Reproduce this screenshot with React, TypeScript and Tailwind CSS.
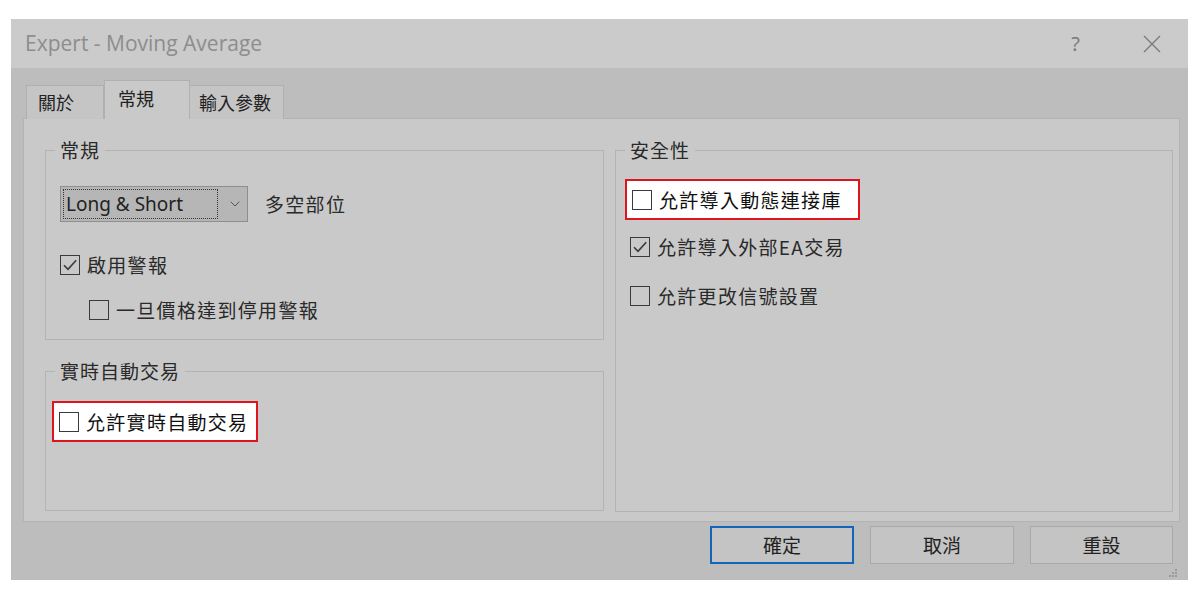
import { ChevronDown } from "lucide-react";

const cjk = "font-['Noto_Sans_CJK_TC','Noto_Sans',sans-serif]";

const Box = ({ checked = false }: { checked?: boolean }) => (
  <span className="w-[20px] h-[20px] border-[1.5px] border-[#3a3a3a] flex items-center justify-center shrink-0">
    {checked && (
      <svg width="16" height="16" viewBox="0 0 16 16">
        <path d="M2 8.2 L6 12.4 L14.2 3.2" fill="none" stroke="#3a3a3a" strokeWidth="1.6" />
      </svg>
    )}
  </span>
);

const Check = ({ label, checked, hl, wide }: { label: string; checked?: boolean; hl?: boolean; wide?: boolean }) => (
  <div
    className={`flex items-center gap-[7px] h-[41px] ${
      hl
        ? `bg-white border-2 border-[#e0141e] text-[#111] w-fit ${wide ? "-ml-[5px] pl-[5px] pr-[16px]" : "-ml-[8px] pl-[5px] pr-[8px]"}`
        : "text-[#2a2a2a]"
    }`}
  >
    <Box checked={checked} />
    <span className="text-[19px] tracking-[1.3px] leading-none">{label}</span>
  </div>
);

const Group = ({ title, className, children }: { title: string; className?: string; children?: React.ReactNode }) => (
  <fieldset className={`border border-[#b3b3b3] pl-[14px] ${className ?? ""}`}>
    <legend className="-ml-[5px] px-[5px] text-[19px] tracking-[1px] leading-[22px] text-[#2a2a2a]">{title}</legend>
    {children}
  </fieldset>
);

export default function App() {
  return (
    <div className={`w-[1200px] h-[600px] bg-white pl-[11px] pt-[19px] ${cjk}`}>
      <div className="w-[1177px] h-[561px] bg-[#bdbdbd] flex flex-col">
        <div className="h-[49px] bg-[#cbcbcb] flex items-center pl-[14px] pr-[26px]">
          <span className="font-['Open_Sans',sans-serif] text-[21px] text-[#8d8d8d] flex-1">Expert - Moving Average</span>
          <span className="font-['Noto_Sans',sans-serif] text-[20px] text-[#7a7a7a] mr-[62px]">?</span>
          <svg width="20" height="20" viewBox="0 0 20 20">
            <path d="M2 2 L18 18 M18 2 L2 18" stroke="#7a7a7a" strokeWidth="1.3" />
          </svg>
        </div>

        <div className="pl-[12px] pr-[8px] pt-[12px] flex flex-col flex-1">
          <div className="flex items-end h-[39px] pl-[3px] relative z-10 -mb-px">
            <div className="h-[34px] w-[78px] bg-[#c5c5c5] border border-[#b0b0b0] border-b-0 flex items-center pl-[11px] text-[18px] text-[#222]">
              關於
            </div>
            <div className="h-[39px] w-[86px] bg-[#c9c9c9] border border-[#b0b0b0] border-b-0 flex items-start pt-[4px] pl-[13px] text-[18px] text-[#222]">
              常規
            </div>
            <div className="h-[34px] w-[94px] bg-[#c5c5c5] border border-[#b0b0b0] border-b-0 border-l-0 flex items-center pl-[9px] text-[18px] text-[#222]">
              輸入參數
            </div>
          </div>
          <div className="h-[404px] bg-[#c9c9c9] border border-[#b3b3b3] pt-[20px] pl-[21px] pr-[6px] pb-[9px] flex gap-[11px]">
            <div className="w-[559px] flex flex-col gap-[20px]">
              <Group title="常規" className="h-[201px]">
                <div className="flex items-center gap-[17px] mt-[25px]">
                  <div className="w-[188px] h-[36px] bg-[#b6b6b6] border border-[#8e8e8e] flex items-center pl-[2px]">
                    <div className="w-[155px] h-[30px] border border-dotted border-[#333] flex items-center pl-[2px] font-['Noto_Sans',sans-serif] text-[19px] text-[#222]">
                      Long &amp; Short
                    </div>
                    <ChevronDown className="ml-[9px] w-[16px] h-[16px] text-[#555]" strokeWidth={1.5} />
                  </div>
                  <span className="text-[19px] tracking-[1.3px] text-[#2a2a2a]">多空部位</span>
                </div>
                <div className="mt-[22px]">
                  <Check label="啟用警報" checked />
                </div>
                <div className="mt-[4px] ml-[29px]">
                  <Check label="一旦價格達到停用警報" />
                </div>
              </Group>
              <Group title="實時自動交易" className="h-[151px]">
                <div className="mt-[19px]">
                  <Check label="允許實時自動交易" hl />
                </div>
              </Group>
            </div>
            <Group title="安全性" className="w-[558px] h-[373px]">
              <div className="mt-[18px]">
                <Check label="允許導入動態連接庫" hl wide />
              </div>
              <div className="mt-[6px]">
                <Check label="允許導入外部EA交易" checked />
              </div>
              <div className="mt-[8px]">
                <Check label="允許更改信號設置" />
              </div>
            </Group>
          </div>
          <div className="flex justify-end gap-[16px] pt-[4px] pr-[7px] relative">
            <button className="w-[144px] h-[38px] border-2 border-[#1166bb] bg-[#c4c4c4] text-[19px] text-[#222]">確定</button>
            <button className="w-[144px] h-[38px] border border-[#a9a9a9] bg-[#c4c4c4] text-[19px] text-[#222]">取消</button>
            <button className="w-[143px] h-[38px] border border-[#a9a9a9] bg-[#c4c4c4] text-[19px] text-[#222]">重設</button>
            <svg className="absolute right-[2px] bottom-[-14px]" width="10" height="10" viewBox="0 0 10 10">
              <rect x="7" y="1" width="2" height="2" fill="#9a9a9a" />
              <rect x="4" y="4" width="2" height="2" fill="#9a9a9a" />
              <rect x="7" y="4" width="2" height="2" fill="#9a9a9a" />
              <rect x="1" y="7" width="2" height="2" fill="#9a9a9a" />
              <rect x="4" y="7" width="2" height="2" fill="#9a9a9a" />
              <rect x="7" y="7" width="2" height="2" fill="#9a9a9a" />
            </svg>
          </div>
        </div>
      </div>
    </div>
  );
}
